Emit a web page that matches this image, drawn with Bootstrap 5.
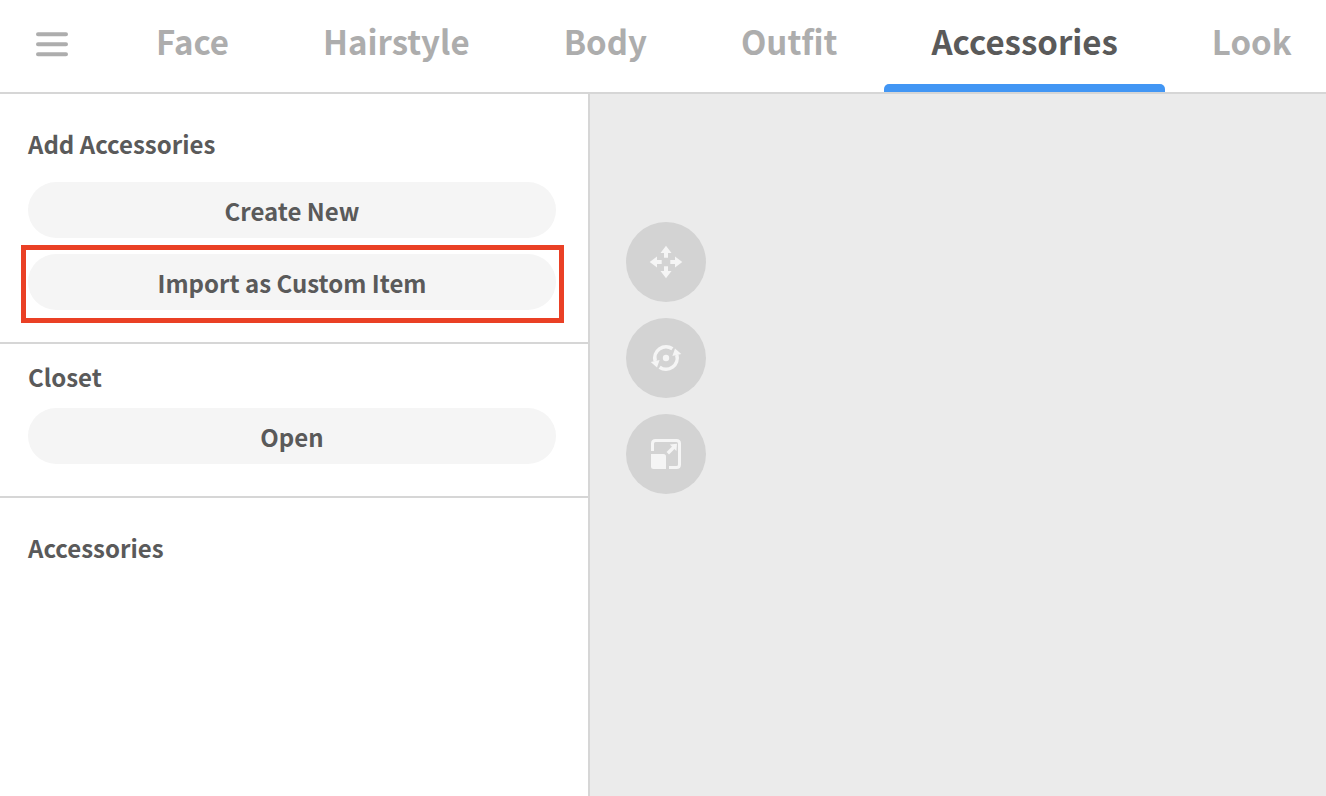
<!DOCTYPE html>
<html lang="en">
<head>
<meta charset="utf-8">
<meta name="viewport" content="width=device-width, initial-scale=1">
<title>Accessories</title>
<link href="https://cdn.jsdelivr.net/npm/bootstrap@5.3.0/dist/css/bootstrap.min.css" rel="stylesheet">
<style>
  body { font-family: "Noto Sans CJK JP", sans-serif; font-weight: 700; color: #5a5a5a; background: #fff; }
  .topbar { border-bottom: 2px solid #d6d6d6; }
  .menu-btn { margin: 0 41px 0 36px; color: #adadad; }
  .tabs .nav-link { position: relative; padding: 17px 47px 27px; font-size: 33px; line-height: 48px; color: #adadad; white-space: nowrap; }
  .tabs .nav-link.active { color: #5a5a5a; }
  .tabs .nav-link.active::after { content: ""; position: absolute; left: 0; right: 0; bottom: 0; height: 8px; border-radius: 5px 5px 0 0; background: #4296f4; }
  .side { flex: 0 0 590px; border-right: 2px solid #d6d6d6; }
  .panel { padding: 30px 32px 32px 28px; }
  .panel + .panel { border-top: 2px solid #d6d6d6; }
  .panel-tight { padding-top: 13px; }
  .panel-title { margin: 0 0 18px; font-size: 24px; line-height: 40px; font-weight: 700; }
  .panel-tight .panel-title { margin-bottom: 11px; }
  .pill { padding: 9px 16px 7px; font-size: 24px; line-height: 40px; font-weight: 700; border: 0; color: #5a5a5a; background: #f5f5f5; }
  .pill:hover { color: #5a5a5a; background: #ececec; }
  .callout-box { position: absolute; inset: -9px -8px -13px -7px; border: 5px solid #ea4025; pointer-events: none; }
  .stage { background: #ebebeb; padding: 128px 36px 36px; }
  .tool { width: 80px; height: 80px; background: #d3d3d3; color: #f5f5f5; }
</style>
</head>
<body class="min-vh-100 d-flex flex-column overflow-hidden">
<header class="topbar d-flex align-items-stretch overflow-hidden">
  <button type="button" class="menu-btn btn p-0 border-0 flex-shrink-0" aria-label="Menu">
    <svg class="d-block" width="32" height="28" viewBox="0 0 32 28" stroke="currentColor" stroke-width="4" stroke-linecap="round"><path d="M2 2.300H30M2 12.300H30M2 22.300H30"/></svg>
  </button>
  <nav class="tabs nav flex-nowrap">
    <a class="nav-link" href="#">Face</a>
    <a class="nav-link" href="#">Hairstyle</a>
    <a class="nav-link" href="#">Body</a>
    <a class="nav-link" href="#">Outfit</a>
    <a class="nav-link active" href="#" aria-current="page">Accessories</a>
    <a class="nav-link" href="#">Look</a>
  </nav>
</header>
<div class="d-flex flex-grow-1">
  <aside class="side">
    <section class="panel">
      <h2 class="panel-title">Add Accessories</h2>
      <div class="d-grid gap-3">
        <button type="button" class="pill btn rounded-pill">Create New</button>
        <div class="position-relative d-grid">
          <button type="button" class="pill btn rounded-pill">Import as Custom Item</button>
          <span class="callout-box"></span>
        </div>
      </div>
    </section>
    <section class="panel panel-tight">
      <h2 class="panel-title">Closet</h2>
      <div class="d-grid">
        <button type="button" class="pill btn rounded-pill">Open</button>
      </div>
    </section>
    <section class="panel">
      <h2 class="panel-title">Accessories</h2>
    </section>
  </aside>
  <main class="stage flex-grow-1 d-flex flex-column gap-3">
    <button type="button" class="tool btn p-0 border-0 rounded-circle" aria-label="Move">
      <svg class="d-block" viewBox="0 0 80 80" fill="currentColor">
        <path id="arrow" d="M40 23.700L45.500 31H42V35.700H38V31H34.500Z"/>
        <use href="#arrow" transform="rotate(90 40 40)"/><use href="#arrow" transform="rotate(180 40 40)"/><use href="#arrow" transform="rotate(270 40 40)"/>
      </svg>
    </button>
    <button type="button" class="tool btn p-0 border-0 rounded-circle" aria-label="Rotate">
      <svg class="d-block" viewBox="0 0 80 80" fill="currentColor">
        <circle cx="40" cy="40" r="3.2"/>
        <g id="turn"><path d="M29.200 43A11.200 11.200 0 0 1 46.400 30.800" fill="none" stroke="currentColor" stroke-width="3.6"/><path d="M24.700 44L33.600 42L31 49.600Z"/></g>
        <use href="#turn" transform="rotate(180 40 40)"/>
      </svg>
    </button>
    <button type="button" class="tool btn p-0 border-0 rounded-circle" aria-label="Scale">
      <svg class="d-block" viewBox="0 0 80 80" fill="currentColor">
        <path d="M26.500 37V29.500Q26.500 26.500 29.500 26.500H50.500Q53.500 26.500 53.500 29.500V50.500Q53.500 53.500 50.500 53.500H43" fill="none" stroke="currentColor" stroke-width="3"/>
        <path d="M27.500 40H37.500Q40 40 40 42.500V55H27.500Q25 55 25 52.500V40Z"/>
        <path d="M51 29.700L43.800 30.600L50.400 37Z"/>
        <path d="M41.800 39.200L48 33" stroke="currentColor" stroke-width="3.4"/>
      </svg>
    </button>
  </main>
</div>
<script src="https://cdn.jsdelivr.net/npm/bootstrap@5.3.0/dist/js/bootstrap.bundle.min.js"></script>
</body>
</html>
